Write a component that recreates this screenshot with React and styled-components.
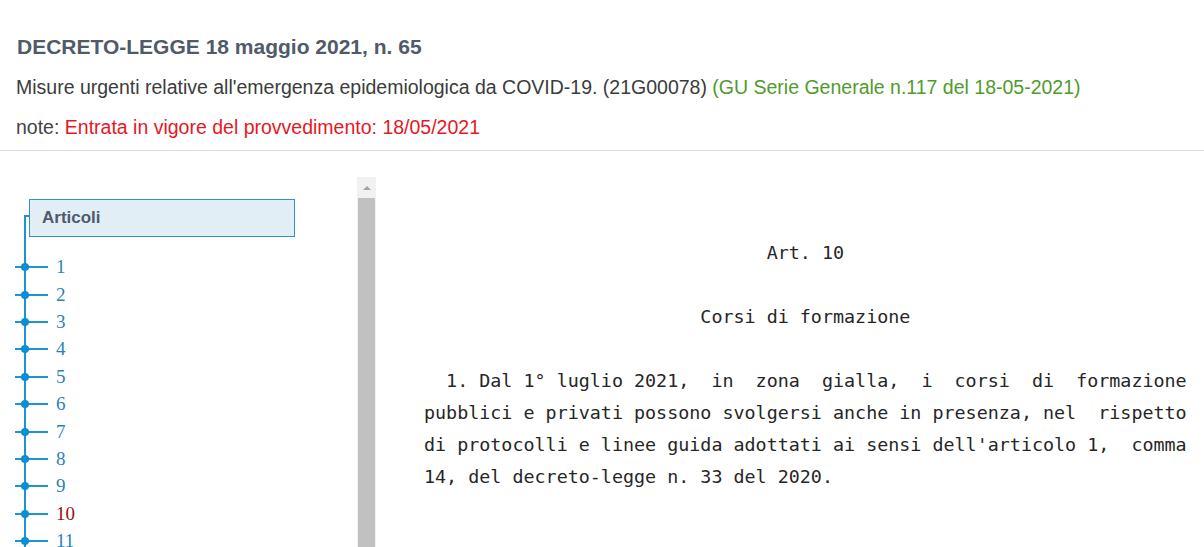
import React from "react";
import styled, { createGlobalStyle } from "styled-components";

const Global = createGlobalStyle`
  html, body { margin: 0; padding: 0; background: #fff; }
  body { font-family: "Liberation Sans", Arial, sans-serif; overflow: hidden; }
`;

const Page = styled.div`
  width: 1204px;
  height: 547px;
  overflow: hidden;
`;

const Header = styled.header`
  padding: 27px 0 3px 16px;
  border-bottom: 1px solid #dedede;
`;

const Title = styled.h1`
  margin: 0;
  height: 40px;
  line-height: 40px;
  font-size: 21px;
  font-weight: 700;
  color: #505a6a;
  padding-left: 1px;
`;

const InfoLine = styled.p`
  margin: 0;
  height: 40px;
  line-height: 40px;
  font-size: 19.5px;
  color: ${(p) => p.$color || "#3c3c3c"};
`;

const Tint = styled.span`
  color: ${(p) => p.$color};
`;

const Main = styled.div`
  display: flex;
  padding-top: 26px;
`;

const Sidebar = styled.aside`
  display: flex;
  flex: none;
`;

const Tree = styled.nav`
  width: 333px;
  padding: 22px 0 0 24px;
`;

const RootBox = styled.div`
  position: relative;
  margin-left: 5px;
  width: 252px;
  height: 36px;
  box-sizing: content-box;
  border: 1px solid #3590c6;
  background: #e2eef6;
  padding-left: 12px;
  display: flex;
  align-items: center;
  font-size: 17px;
  font-weight: 700;
  color: #4f5a6b;

  &::before {
    content: "";
    position: absolute;
    left: -6px;
    top: 15px;
    width: 4px;
    height: 22px;
    border-left: 2px solid #1d94d2;
    border-top: 2px solid #1d94d2;
  }
`;

const List = styled.ul`
  list-style: none;
  margin: 0;
  padding: 16.5px 0 40px 0;
  border-left: 2px solid #1d94d2;
`;

const Item = styled.li`
  position: relative;
  height: 27.4px;
  display: flex;
  align-items: center;
  padding-left: 30px;
  font-family: "Liberation Serif", "Times New Roman", serif;
  font-size: 19px;
  color: ${(p) => (p.$active ? "#9a0f0f" : "#2b82b8")};

  &::before {
    content: "";
    position: absolute;
    left: -11px;
    top: calc(50% - 1px);
    width: 33px;
    height: 2px;
    background: #1d94d2;
  }

  &::after {
    content: "";
    position: absolute;
    left: -5px;
    top: calc(50% - 4px);
    width: 8px;
    height: 8px;
    border-radius: 50%;
    background: #0a8fd0;
  }
`;

const Scrollbar = styled.div`
  width: 19px;
  height: 420px;
  background: #f1f1f1;
  display: flex;
  flex-direction: column;
`;

const ScrollButton = styled.div`
  height: 21px;
  display: flex;
  align-items: center;
  justify-content: center;

  &::before {
    content: "";
    border-left: 4px solid transparent;
    border-right: 4px solid transparent;
    border-bottom: 4px solid #a3a3a3;
  }
`;

const Thumb = styled.div`
  flex: 1;
  margin: 0 1px 0 1px;
  background: #c1c1c1;
`;

const Content = styled.section`
  padding: 60px 0 0 48px;
  font-family: "DejaVu Sans Mono", "Liberation Mono", monospace;
  font-size: 18.37px;
  line-height: 31.8px;
  color: #262626;
`;

const Article = styled.div`
  width: 69ch;
  white-space: pre;
`;

const Centered = styled.div`
  text-align: center;
  margin-bottom: 31.8px;
`;

const Line = styled.div`
  position: relative;
  top: 1px;
`;

const articles = [1, 2, 3, 4, 5, 6, 7, 8, 9, 10, 11];

const paragraph = [
  "  1. Dal 1° luglio 2021,  in  zona  gialla,  i  corsi  di  formazione",
  "pubblici e privati possono svolgersi anche in presenza, nel  rispetto",
  "di protocolli e linee guida adottati ai sensi dell'articolo 1,  comma",
  "14, del decreto-legge n. 33 del 2020.",
];

export default function App() {
  return (
    <Page>
      <Global />
      <Header>
        <Title>DECRETO-LEGGE 18 maggio 2021, n. 65</Title>
        <InfoLine>
          Misure urgenti relative all'emergenza epidemiologica da COVID-19. (21G00078){" "}
          <Tint $color="#4f9b2b">(GU Serie Generale n.117 del 18-05-2021)</Tint>
        </InfoLine>
        <InfoLine $color="#444">
          note: <Tint $color="#e5181f">Entrata in vigore del provvedimento: 18/05/2021</Tint>
        </InfoLine>
      </Header>
      <Main>
        <Sidebar>
          <Tree>
            <RootBox>Articoli</RootBox>
            <List>
              {articles.map((n) => (
                <Item key={n} $active={n === 10}>
                  {n}
                </Item>
              ))}
            </List>
          </Tree>
          <Scrollbar>
            <ScrollButton />
            <Thumb />
          </Scrollbar>
        </Sidebar>
        <Content>
          <Article>
            <Centered>Art. 10</Centered>
            <Centered>Corsi di formazione</Centered>
            {paragraph.map((l, i) => (
              <Line key={i}>{l}</Line>
            ))}
          </Article>
        </Content>
      </Main>
    </Page>
  );
}
